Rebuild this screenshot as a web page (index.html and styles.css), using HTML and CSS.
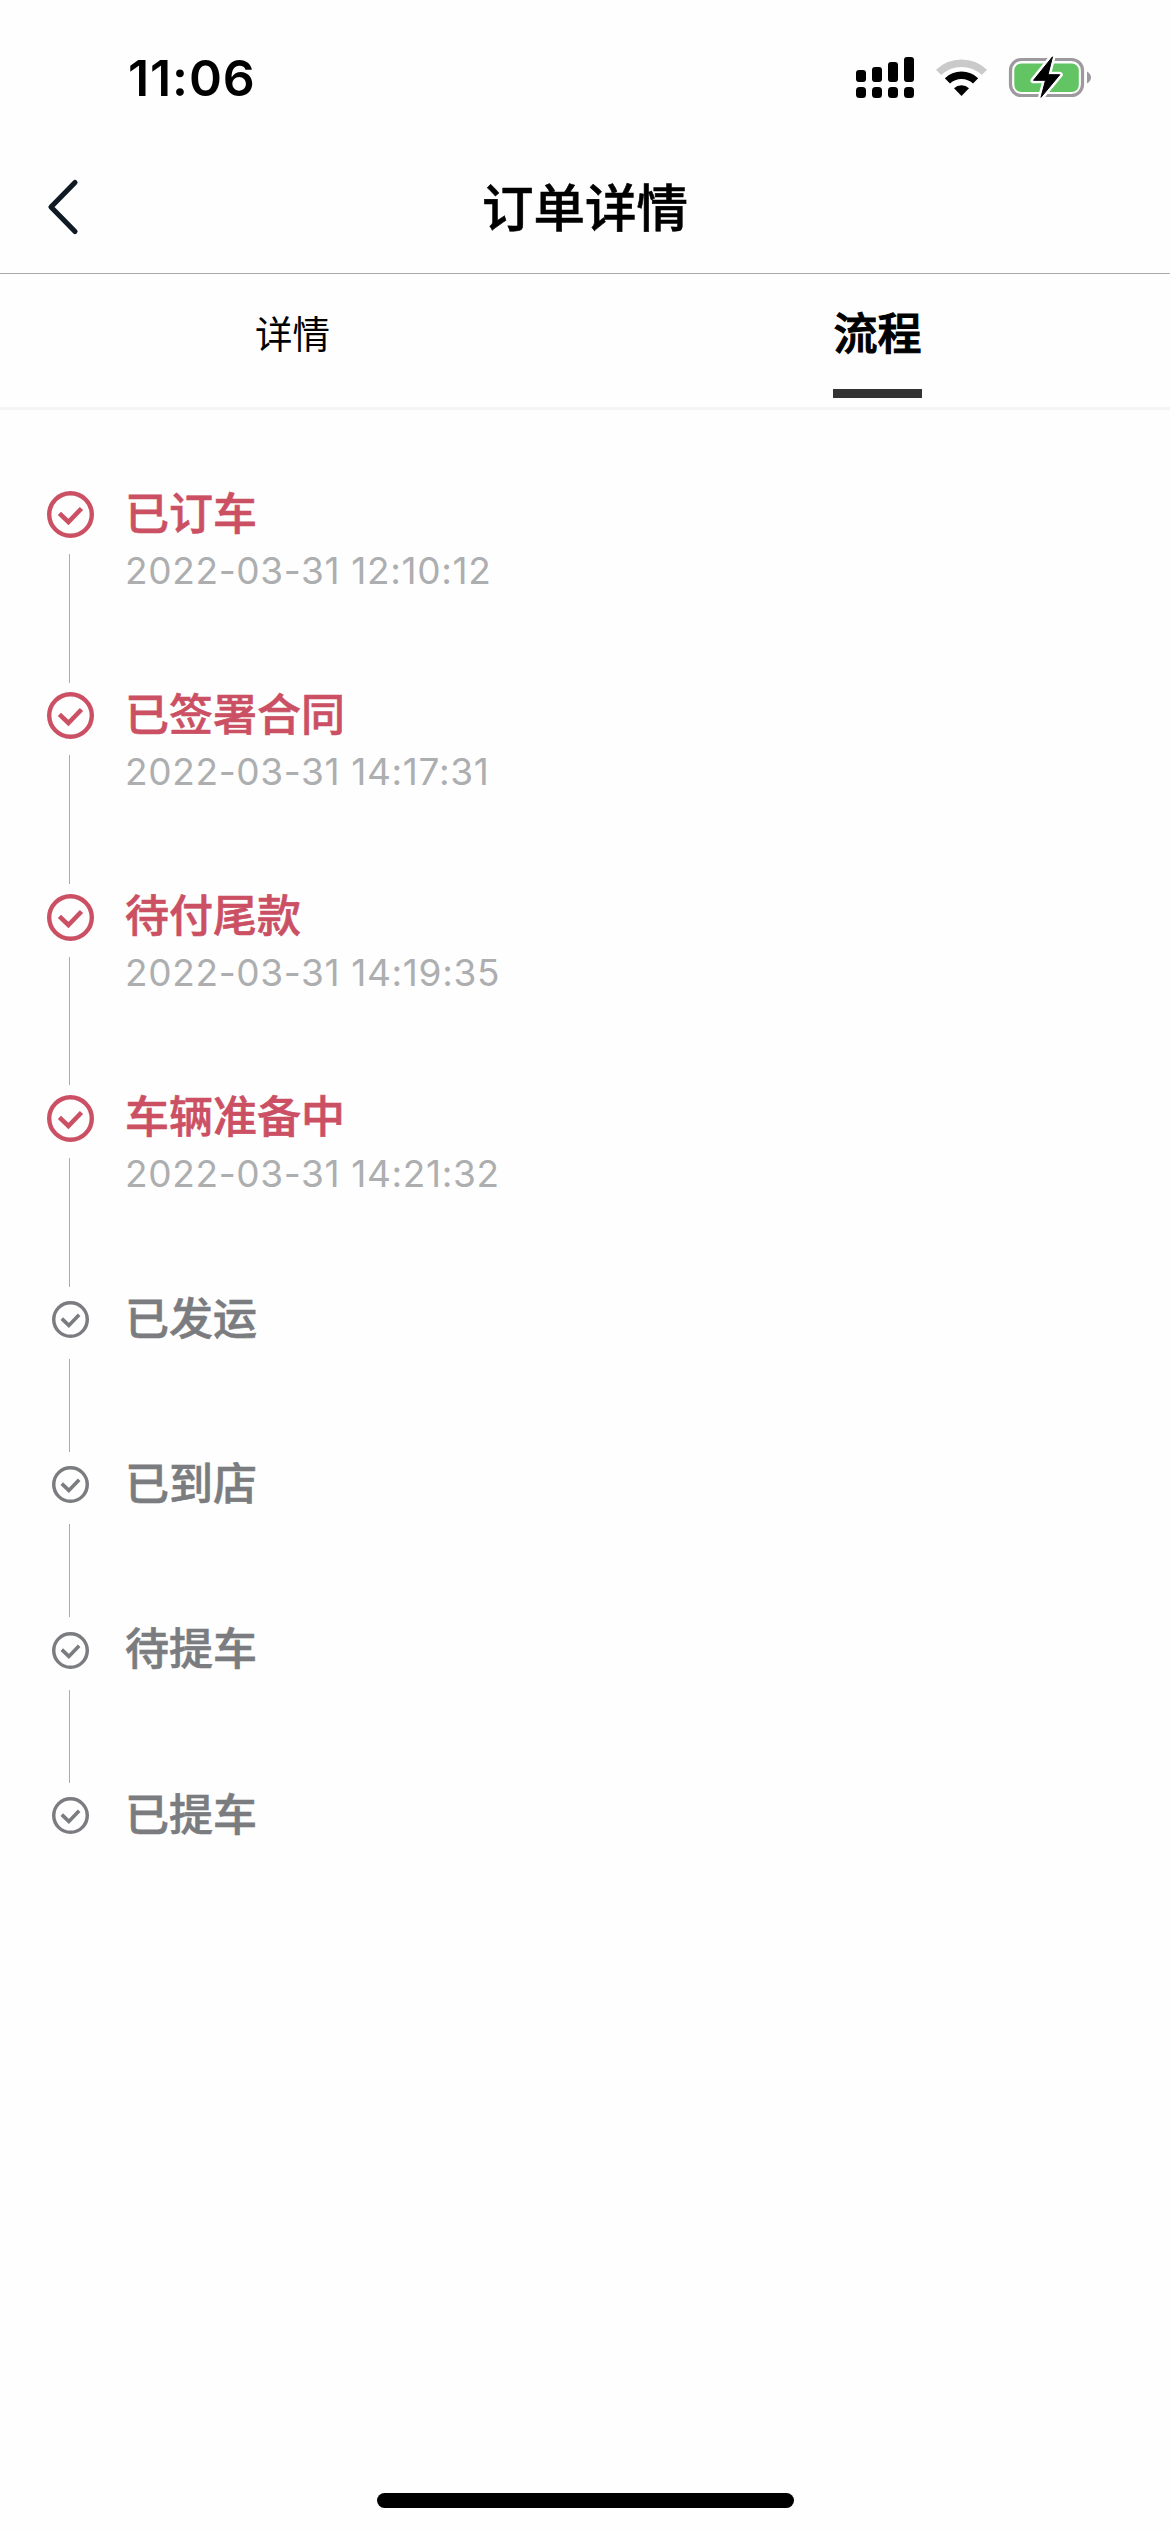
FILE: index.html
```html
<!DOCTYPE html>
<html lang="zh-CN">
<head>
<meta charset="utf-8">
<title>订单详情</title>
<link rel="stylesheet" href="styles.css">
</head>
<body>
<svg class="defs" width="0" height="0" aria-hidden="true">
  <symbol id="check" viewBox="0 0 47 47">
    <circle cx="23.5" cy="23.5" r="21.3" fill="none" stroke="currentColor" stroke-width="4.4"/>
    <path d="M12.4 22.4L21.4 31L34.5 17.5" fill="none" stroke="currentColor" stroke-width="4.6"/>
  </symbol>
</svg>
<div class="screen">
  <header class="status">
    <span class="time">11:06</span>
    <svg class="status-icons" width="236" height="42" viewBox="0 0 236 42">
      <g>
        <rect x="0" y="14" width="10" height="12" rx="3"/>
        <rect x="16" y="11" width="10" height="15" rx="3"/>
        <rect x="32" y="6" width="10" height="20" rx="3"/>
        <rect x="48" y="1" width="10" height="25" rx="3"/>
        <rect x="0" y="31" width="10" height="11" rx="3.5"/>
        <rect x="16" y="31" width="10" height="11" rx="3.5"/>
        <rect x="32" y="31" width="10" height="11" rx="3.5"/>
        <rect x="48" y="31" width="10" height="11" rx="3.5"/>
      </g>
      <g fill="none" stroke-width="7.5">
        <path d="M82.6 16.4A33 33 0 0 1 128.4 16.4" stroke="#cacaca"/>
        <path d="M91.4 24.9A20.5 20.5 0 0 1 119.6 24.9" stroke="#000"/>
      </g>
      <path d="M98 32.2A10.8 10.8 0 0 1 113 32.2L105.5 40Z"/>
      <rect x="154.5" y="3.5" width="72" height="36" rx="11" fill="none" stroke="#9d999e" stroke-width="3.2"/>
      <rect x="158.3" y="7.5" width="64.5" height="28.5" rx="7" fill="#62c462"/>
      <path d="M231 15.5Q235 18 235 21.5T231 27.5Z" fill="#9d999e"/>
      <path d="M196.5 0.8L177.5 24.3H189.5L185 41.3L203.8 18.7H192Z" stroke="#fff" stroke-width="6" stroke-linejoin="round"/>
      <path d="M196.5 0.8L177.5 24.3H189.5L185 41.3L203.8 18.7H192Z" stroke="#000" stroke-width="1" stroke-linejoin="round"/>
    </svg>
  </header>
  <nav class="navbar">
    <svg class="back" width="32" height="58" viewBox="0 0 32 58">
      <path d="M28 4.5L4 29L28 53.5" fill="none" stroke="#101a24" stroke-width="5.2" stroke-linecap="round" stroke-linejoin="round"/>
    </svg>
    <h1 class="title">订单详情</h1>
  </nav>
  <div class="tabs">
    <div class="tab"><span class="tab-label">详情</span></div>
    <div class="tab active"><span class="tab-label">流程</span></div>
  </div>
  <ol class="steps">
    <li class="step done"><div class="rail"><div class="marker"><svg class="icon"><use href="#check"/></svg></div><i class="line"></i></div><div class="info"><div class="name">已订车</div><div class="date">2022-03-31 12:10:12</div></div></li>
    <li class="step done"><div class="rail"><div class="marker"><svg class="icon"><use href="#check"/></svg></div><i class="line"></i></div><div class="info"><div class="name">已签署合同</div><div class="date">2022-03-31 14:17:31</div></div></li>
    <li class="step done"><div class="rail"><div class="marker"><svg class="icon"><use href="#check"/></svg></div><i class="line"></i></div><div class="info"><div class="name">待付尾款</div><div class="date">2022-03-31 14:19:35</div></div></li>
    <li class="step done"><div class="rail"><div class="marker"><svg class="icon"><use href="#check"/></svg></div><i class="line"></i></div><div class="info"><div class="name">车辆准备中</div><div class="date">2022-03-31 14:21:32</div></div></li>
    <li class="step"><div class="rail"><div class="marker"><svg class="icon"><use href="#check"/></svg></div><i class="line"></i></div><div class="info"><div class="name">已发运</div></div></li>
    <li class="step"><div class="rail"><div class="marker"><svg class="icon"><use href="#check"/></svg></div><i class="line"></i></div><div class="info"><div class="name">已到店</div></div></li>
    <li class="step"><div class="rail"><div class="marker"><svg class="icon"><use href="#check"/></svg></div><i class="line"></i></div><div class="info"><div class="name">待提车</div></div></li>
    <li class="step"><div class="rail"><div class="marker"><svg class="icon"><use href="#check"/></svg></div></div><div class="info"><div class="name">已提车</div></div></li>
  </ol>
  <div class="home"></div>
</div>
</body>
</html>
```
FILE: styles.css
```css
* { box-sizing: border-box; }
body { margin: 0; background: #fff; }
.defs { display: none; }
.screen {
  width: 1170px;
  height: 2532px;
  display: flex;
  flex-direction: column;
  background: #fefefe;
  color: #000;
  font-family: "Inter", "Noto Sans CJK SC", sans-serif;
}
.status {
  height: 141px;
  padding: 56px 78px 0 128px;
  display: flex;
  justify-content: space-between;
  align-items: flex-start;
}
.time {
  font-size: 50px;
  font-weight: 600;
  line-height: 44px;
  letter-spacing: 0.9px;
}
.status-icons { display: block; }
.navbar {
  height: 133px;
  padding: 0 47px;
  display: grid;
  grid-template-columns: 32px 1fr 32px;
  align-items: center;
  border-bottom: 1px solid #a9a9a9;
}
.title {
  margin: 0;
  padding-top: 1px;
  text-align: center;
  font-size: 51.5px;
  font-weight: 500;
  line-height: 60px;
  -webkit-text-stroke: 0.6px currentColor;
}
.tabs {
  height: 136px;
  display: flex;
  border-bottom: 3px solid #f5f5f5;
}
.tab {
  flex: 1;
  padding-top: 31px;
  display: flex;
  flex-direction: column;
  align-items: center;
}
.tab-label { font-size: 37.5px; line-height: 60px; }
.active { padding-top: 30px; }
.active .tab-label {
  font-size: 44px;
  font-weight: 500;
  -webkit-text-stroke: 1.1px currentColor;
}
.active::after {
  content: "";
  width: 89px;
  height: 9px;
  margin-top: 25px;
  background: #333;
}
.steps {
  flex: 1;
  margin: 0;
  padding: 71.5px 47px 0;
  list-style: none;
}
.step {
  height: 165.4px;
  display: flex;
  gap: 31px;
  color: #7b7c80;
}
.step.done { height: 201.25px; color: #cb5064; }
.rail {
  width: 47px;
  display: flex;
  flex-direction: column;
  align-items: center;
}
.marker {
  height: 66px;
  display: flex;
  align-items: center;
}
.icon { width: 37px; height: 37px; }
.done .icon { width: 47px; height: 47px; }
.line {
  flex: 1;
  width: 1px;
  margin: 6.5px 2px 0 0;
  background: #aaabad;
}
.name {
  padding-top: 1px;
  font-size: 44px;
  font-weight: 500;
  line-height: 62px;
  -webkit-text-stroke: 0.6px currentColor;
}
.date {
  margin-top: 2px;
  font-size: 37px;
  line-height: 48px;
  letter-spacing: 0.65px;
  color: #adaeb0;
}
.home {
  align-self: center;
  width: 417px;
  height: 15px;
  margin-bottom: 24px;
  border-radius: 8px;
  background: #000;
}
```
